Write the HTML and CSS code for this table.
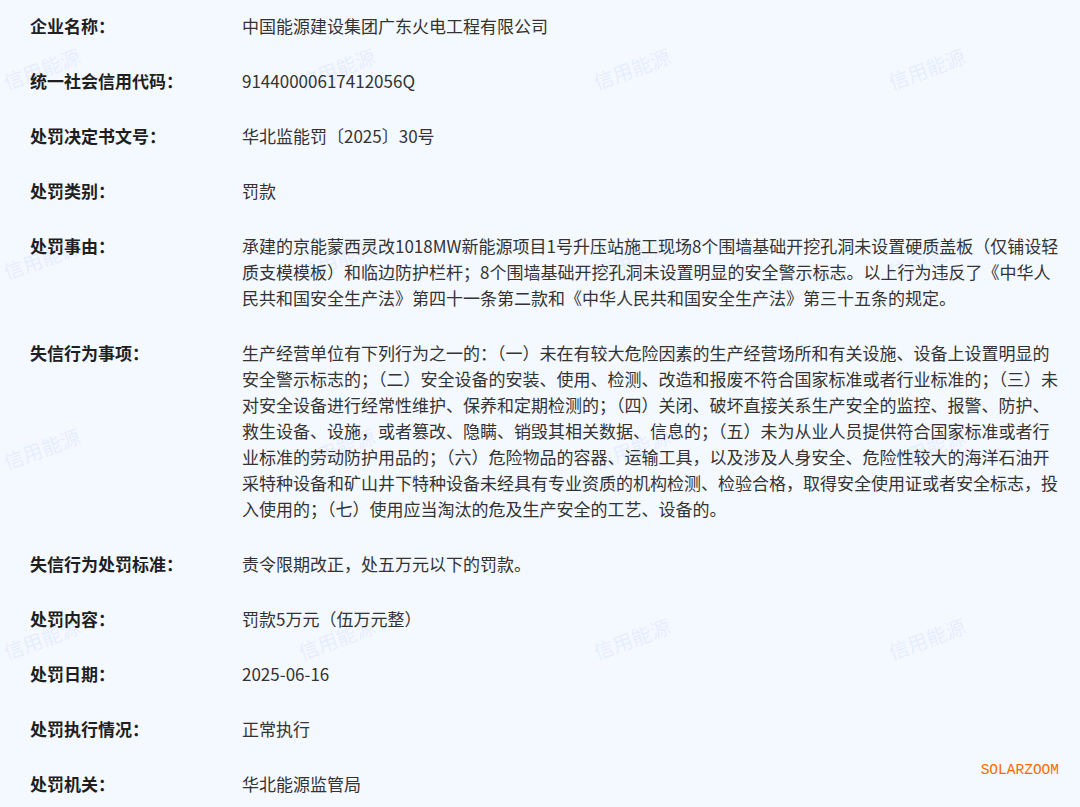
FILE: index.html
```html
<!DOCTYPE html>
<html lang="zh-CN">
<head>
  <meta charset="UTF-8" />
  <meta name="viewport" content="width=device-width, initial-scale=1.0"/>
  <title>行政处罚信息</title>
  <link rel="stylesheet" href="styles.css">
</head>
<body>
  <div class="page">
    <div class="watermarks">
      <span>信用能源</span><span>信用能源</span><span>信用能源</span><span>信用能源</span>
      <span>信用能源</span><span>信用能源</span><span>信用能源</span><span>信用能源</span>
      <span>信用能源</span><span>信用能源</span><span>信用能源</span><span>信用能源</span>
      <span>信用能源</span><span>信用能源</span><span>信用能源</span><span>信用能源</span>
    </div>

    <dl class="info-list">
      <dt>企业名称：</dt>
      <dd>中国能源建设集团广东火电工程有限公司</dd>

      <dt>统一社会信用代码：</dt>
      <dd>91440000617412056Q</dd>

      <dt>处罚决定书文号：</dt>
      <dd>华北监能罚〔2025〕30号</dd>

      <dt>处罚类别：</dt>
      <dd>罚款</dd>

      <dt>处罚事由：</dt>
      <dd>承建的京能蒙西灵改1018MW新能源项目1号升压站施工现场8个围墙基础开挖孔洞未设置硬质盖板（仅铺设轻质支模模板）和临边防护栏杆；8个围墙基础开挖孔洞未设置明显的安全警示标志。以上行为违反了《中华人民共和国安全生产法》第四十一条第二款和《中华人民共和国安全生产法》第三十五条的规定。</dd>

      <dt>失信行为事项：</dt>
      <dd>生产经营单位有下列行为之一的：（一）未在有较大危险因素的生产经营场所和有关设施、设备上设置明显的安全警示标志的；（二）安全设备的安装、使用、检测、改造和报废不符合国家标准或者行业标准的；（三）未对安全设备进行经常性维护、保养和定期检测的；（四）关闭、破坏直接关系生产安全的监控、报警、防护、救生设备、设施，或者篡改、隐瞒、销毁其相关数据、信息的；（五）未为从业人员提供符合国家标准或者行业标准的劳动防护用品的；（六）危险物品的容器、运输工具，以及涉及人身安全、危险性较大的海洋石油开采特种设备和矿山井下特种设备未经具有专业资质的机构检测、检验合格，取得安全使用证或者安全标志，投入使用的；（七）使用应当淘汰的危及生产安全的工艺、设备的。</dd>

      <dt>失信行为处罚标准：</dt>
      <dd>责令限期改正，处五万元以下的罚款。</dd>

      <dt>处罚内容：</dt>
      <dd>罚款5万元（伍万元整）</dd>

      <dt>处罚日期：</dt>
      <dd>2025-06-16</dd>

      <dt>处罚执行情况：</dt>
      <dd>正常执行</dd>

      <dt>处罚机关：</dt>
      <dd>华北能源监管局</dd>
    </dl>

    <div class="brand">SOLARZOOM</div>
  </div>
</body>
</html>
```

FILE: styles.css
```css
* {
  margin: 0;
  padding: 0;
  box-sizing: border-box;
}

body {
  background: #f4f8ff;
  font-family: "Noto Sans CJK SC", "Noto Sans", sans-serif;
  overflow: hidden;
}

.page {
  position: relative;
  width: 1080px;
  height: 807px;
  overflow: hidden;
}

/* tiled "信用能源" watermark */
.watermarks {
  position: absolute;
  top: -27px;
  left: -106px;
  display: grid;
  grid-template-columns: repeat(4, 295px);
  grid-auto-rows: 190px;
  pointer-events: none;
}

.watermarks span {
  display: flex;
  align-items: center;
  justify-content: center;
  font-size: 20px;
  color: rgba(110, 160, 245, 0.12);
  transform: rotate(-20deg);
}

.info-list {
  position: relative;
  display: grid;
  grid-template-columns: 212px 1fr;
  row-gap: 29px;
  padding: 13px 14px 0 30px;
  line-height: 26px;
}

.info-list dt {
  font-size: 17px;
  font-weight: 700;
  color: #1f1f1f;
}

.info-list dd {
  font-size: 17px;
  color: #333;
}

.brand {
  position: absolute;
  right: 21px;
  top: 762px;
  font-family: "Liberation Mono", "DejaVu Sans Mono", monospace;
  font-size: 14.5px;
  line-height: 16px;
  color: #ff6a00;
}
```
